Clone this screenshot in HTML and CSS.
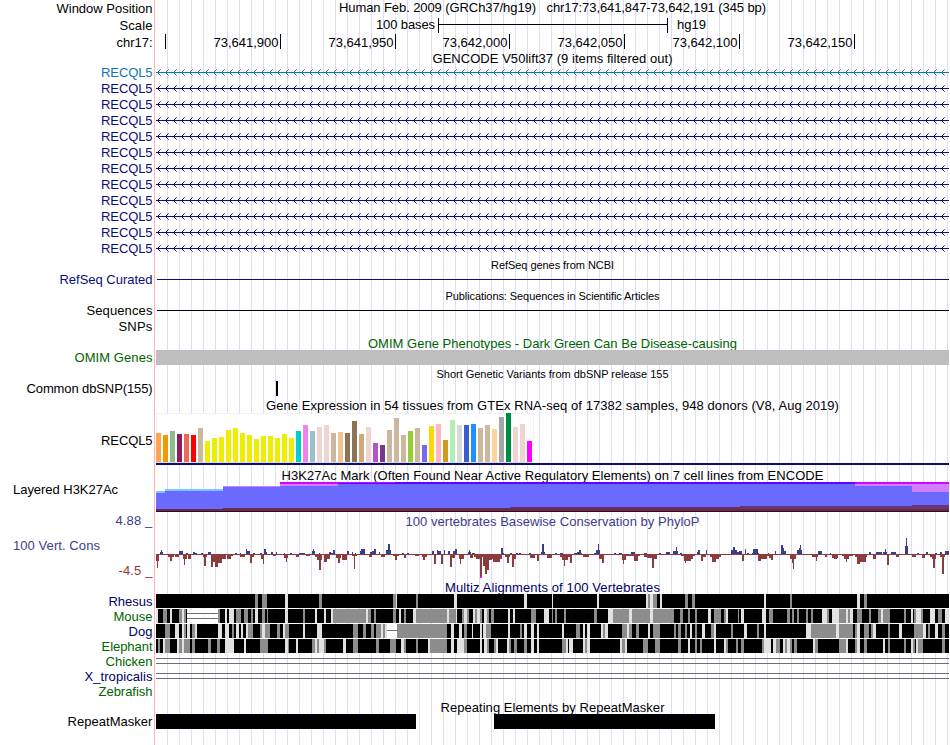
FILE: index.html
```html
<!DOCTYPE html>
<html lang="en">
  <head>
    <meta charset="utf-8">
    <title>chr17:73,641,847-73,642,191</title>
    <link rel="stylesheet" href="styles.css">
  </head>
  <body>
    <div class="browser">
      <div class="row ruler">
        <div class="label" data-w="96">Window Position</div>
        <div class="track position" data-w="427">Human Feb. 2009 (GRCh37/hg19)&nbsp;&nbsp; chr17:73,641,847-73,642,191 (345 bp)</div>
      </div>
      <div class="row ruler">
        <div class="label" data-w="33">Scale</div>
        <div class="track scale">
          <span class="scale-text" data-w="59">100 bases</span>
          <span class="scale-bar"></span>
          <span data-w="29">hg19</span>
        </div>
      </div>
      <div class="row">
        <div class="label" data-w="36">chr17:</div>
        <div class="track ticks">
          <span class="tick first"></span>
          <span class="tick" data-w="65">73,641,900</span>
          <span class="tick" data-w="65">73,641,950</span>
          <span class="tick short" data-w="65">73,642,000</span>
          <span class="tick" data-w="65">73,642,050</span>
          <span class="tick" data-w="65">73,642,100</span>
          <span class="tick" data-w="65">73,642,150</span>
        </div>
      </div>

      <div class="title" data-w="240">GENCODE V50lift37 (9 items filtered out)</div>
      <div id="genes"></div>

      <div class="title small" data-w="123">RefSeq genes from NCBI</div>
      <div class="row gene navy">
        <div class="label" data-w="93">RefSeq Curated</div>
        <div class="track line"></div>
      </div>

      <div class="title small" data-w="214">Publications: Sequences in Scientific Articles</div>
      <div class="row gene">
        <div class="label" data-w="66">Sequences</div>
        <div class="track line"></div>
      </div>
      <div class="row gene">
        <div class="label" data-w="34">SNPs</div>
      </div>

      <div class="title green" data-w="369">OMIM Gene Phenotypes - Dark Green Can Be Disease-causing</div>
      <div class="row gene green">
        <div class="label" data-w="78">OMIM Genes</div>
        <div class="track omim"></div>
      </div>

      <div class="title small" data-w="232">Short Genetic Variants from dbSNP release 155</div>
      <div class="row gene">
        <div class="label" data-w="126">Common dbSNP(155)</div>
        <svg class="track" width="793" height="16"><rect x="120" y="1" width="2" height="15"/></svg>
      </div>

      <div class="title" data-w="573">Gene Expression in 54 tissues from GTEx RNA-seq of 17382 samples, 948 donors (V8, Aug 2019)</div>
      <div class="row gtex">
        <div class="label" data-w="51.5">RECQL5</div>
        <svg class="track" id="gtex" width="793" height="55"></svg>
      </div>

      <div class="title" data-w="542">H3K27Ac Mark (Often Found Near Active Regulatory Elements) on 7 cell lines from ENCODE</div>
      <div class="row h3k">
        <div class="label left" data-w="105">Layered H3K27Ac</div>
        <svg class="track" id="h3k" width="793" height="31"></svg>
      </div>

      <div class="row cons">
        <div class="cons-labels">
          <div class="label blue" data-w="37">4.88 _</div>
          <div class="label left blue" data-w="87">100 Vert. Cons</div>
          <div class="label red" data-w="34">-4.5 _</div>
        </div>
        <div class="track">
          <div class="cons-title blue" data-w="294">100 vertebrates Basewise Conservation by PhyloP</div>
          <svg id="phylop" width="793" height="52"></svg>
        </div>
      </div>

      <div class="title multiz" data-w="215">Multiz Alignments of 100 Vertebrates</div>
      <div id="species"></div>

      <div class="title" data-w="224">Repeating Elements by RepeatMasker</div>
      <div class="row gene">
        <div class="label" data-w="85">RepeatMasker</div>
        <svg class="track" width="793" height="16">
          <rect x="0" y="1" width="260" height="15"/>
          <rect x="338" y="1" width="221" height="15"/>
        </svg>
      </div>
    </div>
    <script src="script.js"></script>
  </body>
</html>
```

FILE: styles.css
```css
body {
  margin: 0;
  background: #fff;
  font-family: "Liberation Sans", Arial, sans-serif;
  font-size: 13px;
  color: #000;
}
.browser {
  width: 949px;
  height: 745px;
  overflow: hidden;
  /* red edge of the image area + guide lines every 12px */
  background-image:
    linear-gradient(#ffb4b4, #ffb4b4),
    repeating-linear-gradient(to right, #dcdcff 0, #dcdcff 1px, transparent 1px, transparent 12px);
  background-position: 154px 0, 167px 0;
  background-size: 1px 100%, 782px 100%;
  background-repeat: no-repeat;
}
.row {
  display: flex;
  height: 15px;
  white-space: nowrap;
}
.ruler {
  height: 17px;
}
.label {
  width: 152.5px;
  margin-right: 3.5px;
  line-height: 17px;
  height: 17px;
  text-align: right;
  flex: none;
  white-space: nowrap;
}
.label.left {
  box-sizing: border-box;
  padding-left: 13px;
  text-align: left;
}
.track {
  width: 793px;
  flex: none;
}
svg {
  display: block;
  shape-rendering: crispEdges;
}
.position {
  text-align: center;
  line-height: 15px;
}
.scale {
  display: flex;
  line-height: 15px;
}
.scale-text {
  width: 279px;
  margin-right: 3px;
  text-align: right;
}
.scale-bar {
  width: 228px;
  height: 15px;
  margin-top: 1px;
  margin-right: 9px;
  border-left: 1px solid #000;
  border-right: 1px solid #000;
  background: linear-gradient(#000, #000) 0 6px / 100% 1px no-repeat;
}
.ticks {
  display: flex;
}
.tick {
  box-sizing: border-box;
  width: 115px;
  height: 15px;
  padding-right: 1.5px;
  border-right: 1px solid #000;
  line-height: 17px;
  text-align: right;
}
.tick.first {
  width: 10px;
}
.tick.short {
  width: 114px;
}
.title {
  width: 793px;
  height: 15px;
  margin-left: 156px;
  line-height: 19px;
  text-align: center;
  white-space: nowrap;
}
.small {
  font-size: 11px;
}
.gene {
  height: 16px;
}
.line {
  height: 1px;
  margin-top: 8px;
  margin-left: 1px;
  width: 792px;
  background: currentColor;
}
.omim {
  height: 15px;
  margin-top: 1px;
  background: #bebebe;
}
.gtex {
  height: 55px;
}
.gtex .label {
  padding-top: 21px;
}
.h3k {
  height: 31px;
}
.cons {
  height: 66px;
}
.cons-labels {
  display: flex;
  flex-direction: column;
  gap: 8px;
}
.cons-title {
  height: 14px;
  line-height: 19px;
  text-align: center;
}
.navy {
  color: #0c0c78;
}
.sky {
  color: #0c78b4;
}
.green {
  color: #006400;
}
.blue {
  color: #3c3c8c;
}
.red {
  color: #8c3c3c;
}
.multiz,
.dark {
  color: #000064;
}
```

FILE: script.js
```js
function rect(x, y, w, h, fill) {
  return `<rect x="${x}" y="${y}" width="${w}" height="${h}" fill="${fill}"/>`;
}

// gene models: intron line with strand arrows
let arrows = "";
let tips = "";
for (let x = 1; x < 792; x += 8) {
  arrows += `M${x + 1} 7h1v3h-1zM${x + 2} 6h1v1h-1zM${x + 2} 10h1v1h-1z`;
  tips += `M${x + 3} 5h1v1h-1zM${x + 3} 11h1v1h-1z`;
}
let genes = "";
for (let i = 0; i < 12; i++) {
  genes += `<div class="row gene ${i === 0 ? "sky" : "navy"}">
    <div class="label" data-w="51.5">RECQL5</div>
    <svg class="track" width="793" height="16" fill="currentColor">
      <rect x="0" y="8" width="793" height="1"/>
      <path d="${arrows}"/>
      <path d="${tips}" opacity="0.6"/>
    </svg></div>`;
}
document.getElementById("genes").innerHTML = genes;

// GTEx expression, one bar per tissue
const brain = Array(13).fill("#eeee00");
const tissueColors = [
  "#ffa54f", "#ee9a00", "#8fbc8f", "#8b1c62", "#ee6a50", "#ff0000", "#cdb79e",
  ...brain,
  "#00cdcd", "#ee82ee", "#9ac0cd", "#eed5d2", "#eed5d2", "#cdb79e", "#eec591",
  "#8b7355", "#8b7355", "#cdaa7d", "#eed5d2", "#b452cd", "#7a378b", "#cdb79e",
  "#cdb79e", "#cdb79e", "#9acd32", "#cdb79e", "#7a67ee", "#ffd700", "#ffb6c1",
  "#cd9b1d", "#b4eeb4", "#d9d9d9", "#3a5fcd", "#1e90ff", "#cdb79e", "#cdb79e",
  "#ffd39b", "#a6a6a6", "#008b45", "#eed5d2", "#eed5d2", "#ff00ff",
];
const expression = [
  29, 27, 31, 28, 28, 27, 34, 21, 24, 25, 32, 34, 29, 27, 23, 26, 26, 24,
  28, 24, 31, 37, 31, 35, 37, 29, 30, 29, 41, 28, 35, 19, 17, 32, 44, 27,
  31, 34, 17, 36, 38, 22, 42, 37, 37, 38, 34, 37, 33, 45, 49, 35, 38, 21,
];
let gtex = rect(0, 2, 378, 50, "#f2f2f2") + rect(1, 3, 376, 48, "#fff") + rect(0, 51, 378, 1, "#dcdcdc");
expression.forEach((h, i) => {
  gtex += rect(i * 7, 51 - h, 5, h, tissueColors[i]);
});
gtex += rect(0, 52, 793, 2, "#0c0c78");
document.getElementById("gtex").innerHTML = gtex;

// H3K27Ac layers: x, y, width, height, color
const layers = [
  [0, 10, 9, 2, "#78c8ff"], [9, 8, 58, 2, "#78c8ff"],
  [0, 12, 9, 19, "#6a6aff"], [9, 10, 58, 21, "#6a6aff"],
  [67, 5, 57, 1, "#d27fff"], [67, 6, 57, 25, "#6a6aff"],
  [124, 1, 58, 2, "#d800ff"], [124, 3, 58, 2, "#d27fff"], [124, 5, 58, 26, "#6a6aff"],
  [182, 1, 57, 1, "#d800ff"], [182, 2, 57, 1, "#6000ff"], [182, 3, 517, 28, "#6a6aff"],
  [239, 1, 460, 2, "#6000ff"],
  [699, 1, 94, 2, "#d800ff"], [699, 3, 57, 2, "#d27fff"], [699, 5, 57, 26, "#6a6aff"],
  [756, 3, 37, 8, "#d27fff"], [756, 11, 37, 20, "#6a6aff"],
  [0, 28, 67, 3, "#6a2b45"], [67, 27, 287, 4, "#6a2b45"], [354, 26, 230, 5, "#6a3060"],
  [584, 25, 172, 6, "#6a3575"], [756, 24, 37, 7, "#6a3575"],
  [354, 28, 439, 2, "#6a2b3c"], [0, 30, 793, 1, "#32082d"],
];
document.getElementById("h3k").innerHTML = layers.map((l) => rect(...l)).join("");

// conservation scores, "x:width:height"
const up = `4:3:2 5:1:4 23:4:3 30:2:1 37:2:2 39:2:1 45:2:1 52:3:2 53:2:2 79:2:1 84:1:1 90:1:5 91:3:3
  97:2:1 104:2:1 108:2:5 110:1:2 115:2:2 120:1:2 128:1:1 134:2:1 143:6:1 156:3:3 157:1:5 163:1:1
  173:2:2 177:2:4 175:3:1 191:2:3 196:1:2 199:1:1 204:1:3 205:4:5 214:6:2 218:2:5 216:4:3 223:1:2
  230:5:4 232:2:10 246:2:1 251:2:1 276:2:3 281:4:3 281:1:4 288:1:4 292:2:3 297:4:3 299:2:5
  312:3:2 313:1:4 316:3:1 345:2:6 347:1:1 354:2:1 360:2:1 363:2:1 373:2:1 385:4:2 386:2:10 399:2:1
  404:3:1 418:8:1 421:4:2 423:2:4 438:6:1 440:4:4 442:1:10 458:2:1 463:3:1 475:4:2 488:3:1 503:2:1
  510:4:2 517:5:3 520:1:7 524:2:1 542:2:4 541:3:2 550:1:4 575:6:4 577:2:7 581:3:2 583:3:3 589:1:5
  591:2:1 597:5:5 596:7:1 612:1:1 619:1:3 625:2:9 627:1:6 628:2:3 641:5:4 643:1:6 644:1:9
  662:4:3 674:1:1 713:2:2 720:6:2 727:4:2 729:1:5 735:5:2 749:3:8 750:1:16 761:2:1 770:2:2
  779:2:1 784:2:2 789:4:3`;
const down = `0:3:7 1:1:14 12:6:3 14:2:7 19:4:3 27:4:5 28:1:11 32:3:5 48:2:12 47:4:3 55:2:13 57:2:8
  59:3:13 62:4:9 66:4:5 71:4:5 75:2:2 84:5:3 94:2:9 96:2:3 105:3:5 107:1:10 117:3:2 128:4:4 130:1:8
  140:3:3 150:4:2 159:7:3 161:5:6 163:2:16 168:3:8 171:3:5 180:5:4 182:2:9 186:5:6 196:5:2 198:1:15
  213:3:3 225:4:3 237:6:2 239:2:6 248:2:4 259:4:2 266:5:3 267:2:6 278:2:10 285:2:10 294:2:13 296:3:4
  303:5:5 304:1:10 314:3:4 318:17:3 320:5:5 324:2:25 327:4:12 329:2:20 330:3:16 333:3:6 337:7:8
  335:11:5 351:2:9 349:5:3 356:2:13 358:2:5 374:5:4 381:2:7 391:5:4 404:12:3 406:6:6 408:1:12
  414:2:9 427:6:3 443:5:5 446:2:9 466:4:6 467:1:10 478:4:7 470:14:2 488:12:3 491:6:4 496:2:14
  498:3:5 525:3:2 528:7:7 529:1:9 535:2:5 537:2:2 545:2:7 547:3:3 554:11:3 556:4:8 560:3:5
  586:2:7 602:3:7 605:6:5 611:2:2 613:4:4 615:2:6 634:6:5 636:2:9 637:1:15 656:6:3 660:1:7
  669:2:3 676:6:4 678:3:5 686:11:2 688:5:5 690:1:8 699:12:3 701:3:10 704:6:8 717:3:5 731:2:11
  740:3:3 756:4:3 766:3:4 774:6:3 776:4:5 777:2:14 784:5:3 786:2:20`;
function bars(data, place) {
  return data.split(/\s+/).map((s) => place(...s.split(":").map(Number))).join("");
}
document.getElementById("phylop").innerHTML =
  rect(0, 28, 793, 1, "#8c3c3c") +
  bars(up, (x, w, h) => rect(x, 28 - h, w, h, "#3c3c8c")) +
  bars(down, (x, w, h) => rect(x, 28, w, h, "#8c3c3c")) +
  rect(324, 50, 2, 2, "#ff00ff");

// alignment blocks on black: x, shade, width (g = grey, l = light, w = gap)
const species = [
  ["Rhesus", "dark", 44, "99g3 106g5 129l3 163g3 237g3 240l1 260g2 298l3 368l3 396l1 441l2 490l2 492g2 494l3 497g4 504l2 529g3 536g3 608l2 634g2 701l3 708g3"],
  ["Mouse", "green", 39, `0l2 7g4 14l2 23g3 26l2 28g2 31w31 62g2 69l2 73l5 80g5 88g4 95g2 99l3 106g3 111g1 129l3 147g2
    159l2 168l2 175l2 177g33 210l2 212g3 218g2 237g3 243l2 248g2 257l3 260g31 291l2 293g7 300l1 306g2 308l3
    311g2 317l2 319g2 321l3 324g2 328l3 331g2 335g3 352l2 357l2 375g5 388l5 396g1 399g2 408g2 438g3 452l5
    457g16 473l3 476g18 494l3 497g21 524g3 532g2 539g2 552l3 558g7 568g2 570l2 582g1 585l3 606l4 613g4
    631g3 636g2 641g2 650g2 655g2 666l5 671g2 676l7 683g7 690l2 692g2 694l3 701g5 713g2 722g3 725l2 727g7
    748g2 755l2 758g2 760l5 765g2 774l5 782g4 789l4`],
  ["Dog", "dark", 24, `9g5 19l4 26l2 28g2 31l3 36g3 39l2 62l4 69l4 76g2 80l3 85l2 90l2 92g5 104g2 106l3 109g5 121g3
    127l2 129g4 147l2 161l5 197g5 207g3 215g3 220g5 225l2 227g2 229l2 231w10 241g50 295l3 303l3 308g3 316l1
    324l2 327l3 330g5 352l2 364g2 368l3 375l3 381l2 406l2 420g4 427l2 431l3 445l2 447g2 449l3 466g5 471l2
    473g3 480g3 492l2 497g7 518g2 522g3 529g2 534l2 539g2 546l3 555g3 558l2 575g2 588l3 601g2 608l2
    650l5 655g25 680l3 683g14 699g2 701l3 708g5 715g2 717l3 732g2 743l3 758g9 767l3 772g2 779l3 786g3`],
  ["Elephant", "green", 51, `2g2 7l2 9g5 21l2 23g3 26l2 28g6 36g3 52g3 61g3 69l9 88l2 104g8 129l3 132g1 140l2 156g3 159l2
    161g2 163l5 168g2 187l3 197g5 220g3 234g6 245l3 248g2 260g2 272l2 274g17 295l3 301l7 308g3 324l2
    328l3 331g2 338g2 340l2 351l2 353g2 358g3 368g3 375l3 381l2 406g4 410l2 413l4 427l2 429g2 431l3
    464l2 466g3 469l2 487g5 499g5 522g3 532l2 539g2 544g2 558l2 568l2 570g2 580g2 585g3 606g2 608l7
    617l3 620g4 627l2 629g2 631l3 634g2 638g3 657l2 659g3 683g7 690l2 699g2 701l3 708g3 727l2 732g2
    748g2 755l2 757g2 760l2 762g5 786g3`],
  ["Chicken", "green", 47, null],
  ["X_tropicalis", "dark", 68, null],
  ["Zebrafish", "green", 54, ""],
];
const shades = { g: "#8c8c8c", l: "#e1e1e1" };
function blocks(name, data) {
  if (data === "") return "";
  if (data === null) {
    return rect(0, 5, 793, 1, "#6e6e6e") + rect(0, 10, 793, 1, "#6e6e6e");
  }
  let out = "";
  let start = 0;
  const parts = data.split(/\s+/).map((s) => {
    const m = s.match(/(\d+)([glw])(\d+)/);
    return { x: Number(m[1]), kind: m[2], w: Number(m[3]) };
  });
  parts.filter((p) => p.kind === "w").forEach((p) => {
    out += rect(start, 1, p.x - start, 14, "#000");
    start = p.x + p.w;
    // double line = unalignable bases, single line = gap
    const lines = name === "Mouse" ? [5, 10] : [7];
    out += rect(p.x, 1, p.w, 14, "#fff");
    lines.forEach((y) => {
      out += rect(p.x, y, p.w, 1, "#6e6e6e");
    });
  });
  out += rect(start, 1, 793 - start, 14, "#000");
  parts.filter((p) => p.kind !== "w").forEach((p) => {
    out += rect(p.x, 1, p.w, 14, shades[p.kind]);
  });
  return out;
}
document.getElementById("species").innerHTML = species.map(([name, color, w, data]) =>
  `<div class="row ${color}">
    <div class="label" data-w="${w}">${name}</div>
    <svg class="track" width="793" height="15">${blocks(name, data)}</svg>
  </div>`
).join("");

// spread each text over its set width
document.querySelectorAll("[data-w]").forEach((el) => {
  const range = document.createRange();
  range.selectNodeContents(el);
  const natural = range.getBoundingClientRect().width;
  el.style.letterSpacing = (el.dataset.w - natural) / el.textContent.length + "px";
});
```
